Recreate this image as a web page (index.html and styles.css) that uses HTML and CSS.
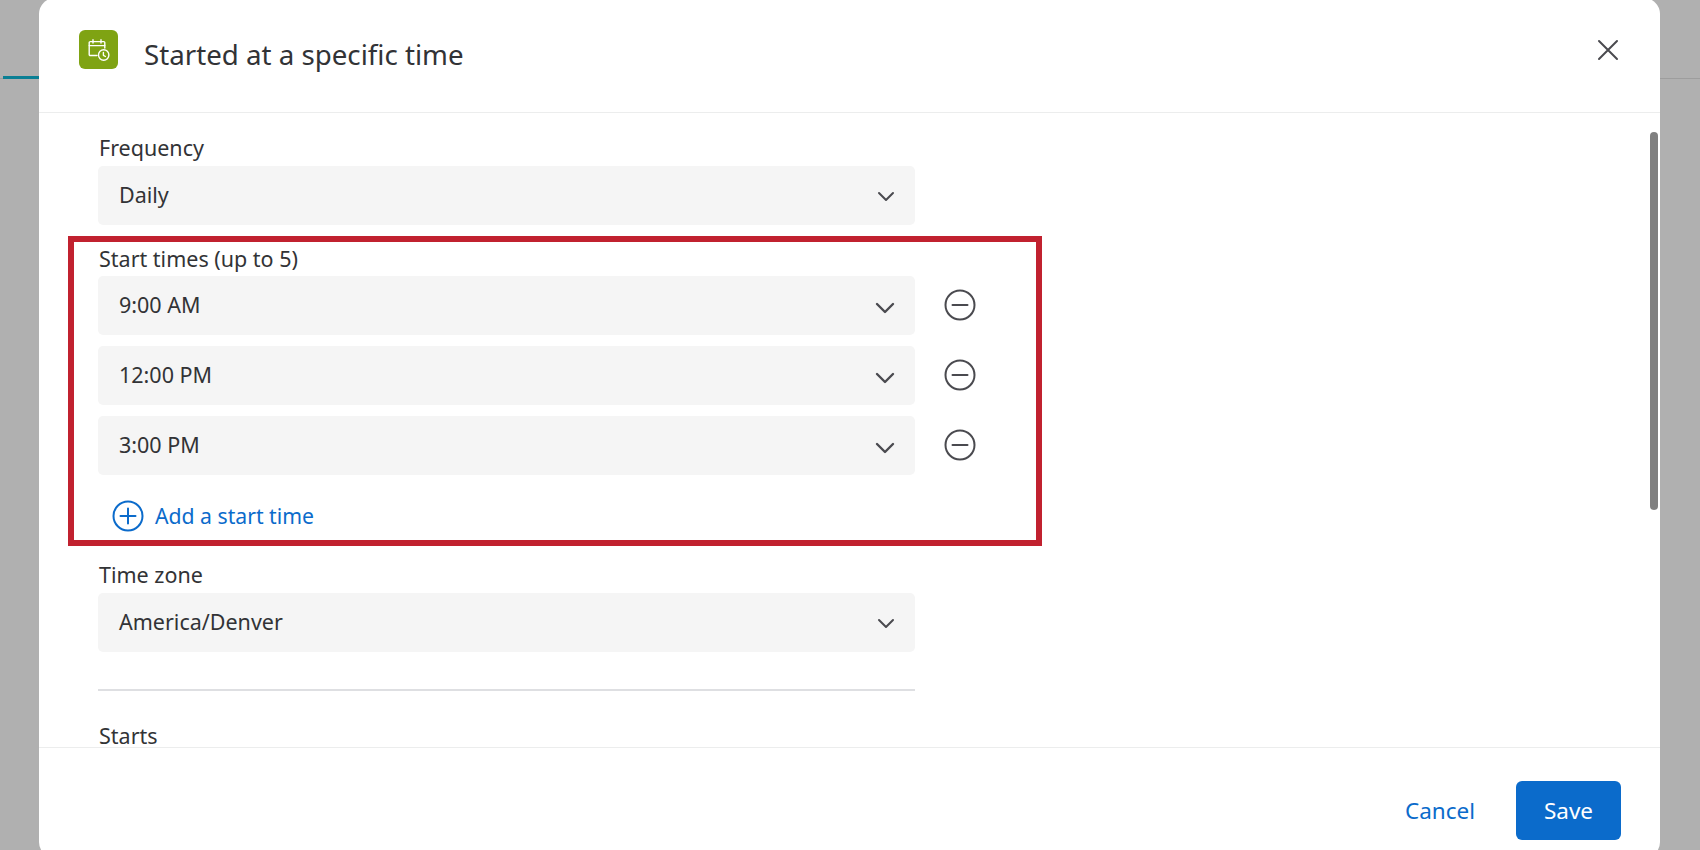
FILE: index.html
```html
<!DOCTYPE html>
<html lang="en">
<head>
<meta charset="utf-8">
<title>Started at a specific time</title>
<link rel="stylesheet" href="styles.css">
</head>
<body>
<div class="backdrop">
  <div class="tab-row"><span class="tab-active"></span></div>
</div>
<div class="modal">
  <header class="modal-head">
    <span class="app-icon">
      <svg width="24" height="24" viewBox="0 0 24 24" fill="none" stroke="#fff" stroke-width="1.4" stroke-linecap="round" stroke-linejoin="round">
        <path d="M10 17.5H3.2a1 1 0 0 1-1-1V4.6a1 1 0 0 1 1-1h13.6a1 1 0 0 1 1 1V10"/>
        <path d="M2.2 7.6h15.6M6 1.7v3.4M14 1.7v3.4"/>
        <circle cx="16.7" cy="17" r="5.2"/>
        <path d="M16.4 14.4v2.9l2 1.2"/>
      </svg>
    </span>
    <h1 class="modal-title">Started at a specific time</h1>
    <svg class="close" width="22" height="22" viewBox="0 0 22 22" fill="none" stroke="#4a4a4f" stroke-width="2" stroke-linecap="round"><path d="M2 2l18 18M20 2L2 20"/></svg>
  </header>
  <div class="modal-body">
    <div class="field">
      <label class="label">Frequency</label>
      <div class="select"><span>Daily</span><svg class="chev" width="18" height="11" viewBox="0 0 18 11" fill="none" stroke="#4a4a4f" stroke-width="2" stroke-linecap="round" stroke-linejoin="round"><path d="M2 2l7 7 7-7"/></svg></div>
    </div>
    <div class="field times">
      <label class="label label-tight">Start times (up to 5)</label>
      <div class="time-row">
        <div class="select"><span>9:00 AM</span><svg class="chev-lg" width="20" height="12" viewBox="0 0 20 12" fill="none" stroke="#4a4a4f" stroke-width="2.4" stroke-linecap="round" stroke-linejoin="round"><path d="M2 2l8 8 8-8"/></svg></div>
        <svg class="round-btn" width="32" height="32" viewBox="0 0 32 32" fill="none" stroke="#4a4a4f" stroke-width="2"><circle cx="16" cy="16" r="14.5"/><path d="M8.5 16h15" stroke-linecap="round"/></svg>
      </div>
      <div class="time-row">
        <div class="select"><span>12:00 PM</span><svg class="chev-lg" width="20" height="12" viewBox="0 0 20 12" fill="none" stroke="#4a4a4f" stroke-width="2.4" stroke-linecap="round" stroke-linejoin="round"><path d="M2 2l8 8 8-8"/></svg></div>
        <svg class="round-btn" width="32" height="32" viewBox="0 0 32 32" fill="none" stroke="#4a4a4f" stroke-width="2"><circle cx="16" cy="16" r="14.5"/><path d="M8.5 16h15" stroke-linecap="round"/></svg>
      </div>
      <div class="time-row">
        <div class="select"><span>3:00 PM</span><svg class="chev-lg" width="20" height="12" viewBox="0 0 20 12" fill="none" stroke="#4a4a4f" stroke-width="2.4" stroke-linecap="round" stroke-linejoin="round"><path d="M2 2l8 8 8-8"/></svg></div>
        <svg class="round-btn" width="32" height="32" viewBox="0 0 32 32" fill="none" stroke="#4a4a4f" stroke-width="2"><circle cx="16" cy="16" r="14.5"/><path d="M8.5 16h15" stroke-linecap="round"/></svg>
      </div>
      <div class="add-row">
        <svg width="32" height="32" viewBox="0 0 32 32" fill="none" stroke="#0b6bcb" stroke-width="2"><circle cx="16" cy="16" r="14.5"/><path d="M16 8.5v15M8.5 16h15" stroke-linecap="round"/></svg>
        <span>Add a start time</span>
      </div>
    </div>
    <div class="field zone">
      <label class="label">Time zone</label>
      <div class="select"><span>America/Denver</span><svg class="chev" width="18" height="11" viewBox="0 0 18 11" fill="none" stroke="#4a4a4f" stroke-width="2" stroke-linecap="round" stroke-linejoin="round"><path d="M2 2l7 7 7-7"/></svg></div>
    </div>
    <hr class="rule">
    <label class="label label-last">Starts</label>
    <div class="highlight"></div>
    <div class="scrollbar"></div>
  </div>
  <footer class="modal-foot">
    <span class="cancel">Cancel</span>
    <span class="save">Save</span>
  </footer>
</div>
</body>
</html>
```
FILE: styles.css
```css
* { box-sizing: border-box; }
html, body { margin: 0; height: 100%; overflow: hidden; }
body { background: #b0b0b0; font-family: "Noto Sans", "Liberation Sans", sans-serif; color: #323336; position: relative; }
.backdrop { height: 100%; padding-top: 76px; }
.tab-row { height: 3px; border-bottom: 1px solid #9d9d9d; padding-left: 3px; }
.tab-active { display: block; width: 40px; height: 3px; background: #0a7f94; }
.modal { position: absolute; left: 39px; top: -2px; width: 1621px; height: 860px; background: #fff; border-radius: 16px; display: flex; flex-direction: column; }
.modal-head { height: 115px; flex: none; display: flex; align-items: flex-start; padding: 32px 40px 0 40px; border-bottom: 1px solid #eceded; }
.app-icon { width: 39px; height: 39px; border-radius: 6px; background: #7fa313; display: flex; align-items: center; justify-content: center; }
.modal-title { margin: 5px 0 0 26px; font-size: 27.7px; line-height: 38px; font-weight: 400; flex: 1; }
.close { margin: 9px 0 0 0; transform: translateX(-1px); }
.modal-body { position: relative; height: 634px; flex: none; padding: 20px 0 0 59px; }
.field { width: 817px; }
.label { display: block; font-size: 21.5px; line-height: 29px; margin-bottom: 4px; padding-left: 1px; }
.label-tight { margin-bottom: 3px; }
.label-last { line-height: 22px; margin-bottom: 0; }
.select { width: 817px; height: 59px; flex: none; background: #f5f5f5; border-radius: 5px; display: flex; align-items: center; justify-content: space-between; padding: 0 20px 2px 21px; font-size: 21.5px; }
.chev { margin-top: 4px; }
.chev-lg { margin-top: 6px; }
.times { margin-top: 19px; }
.time-row { display: flex; align-items: center; gap: 29px; margin-bottom: 11px; width: 900px; }
.round-btn { margin-bottom: 2px; }
.add-row { display: flex; align-items: center; gap: 11px; margin: 24.5px 0 0 14px; color: #0b6bcb; font-size: 21.2px; height: 32px; }
.zone { margin-top: 28px; }
.rule { width: 817px; margin: 37px 0 34px; border: 0; border-top: 2px solid #dedfe2; }
.highlight { position: absolute; left: 29px; top: 123px; width: 974px; height: 310px; border: 6px solid #c1212f; pointer-events: none; }
.scrollbar { position: absolute; right: 2px; top: 19px; width: 8px; height: 378px; border-radius: 4px; background: #808080; }
.modal-foot { flex: 1; border-top: 1px solid #eceded; display: flex; justify-content: flex-end; align-items: flex-start; gap: 41px; padding: 33px 39px 0 0; font-size: 22.5px; }
.cancel { color: #0b6bcb; line-height: 59px; }
.save { width: 105px; height: 59px; border-radius: 6px; background: #0b6bcb; color: #fff; display: flex; align-items: center; justify-content: center; }
```
